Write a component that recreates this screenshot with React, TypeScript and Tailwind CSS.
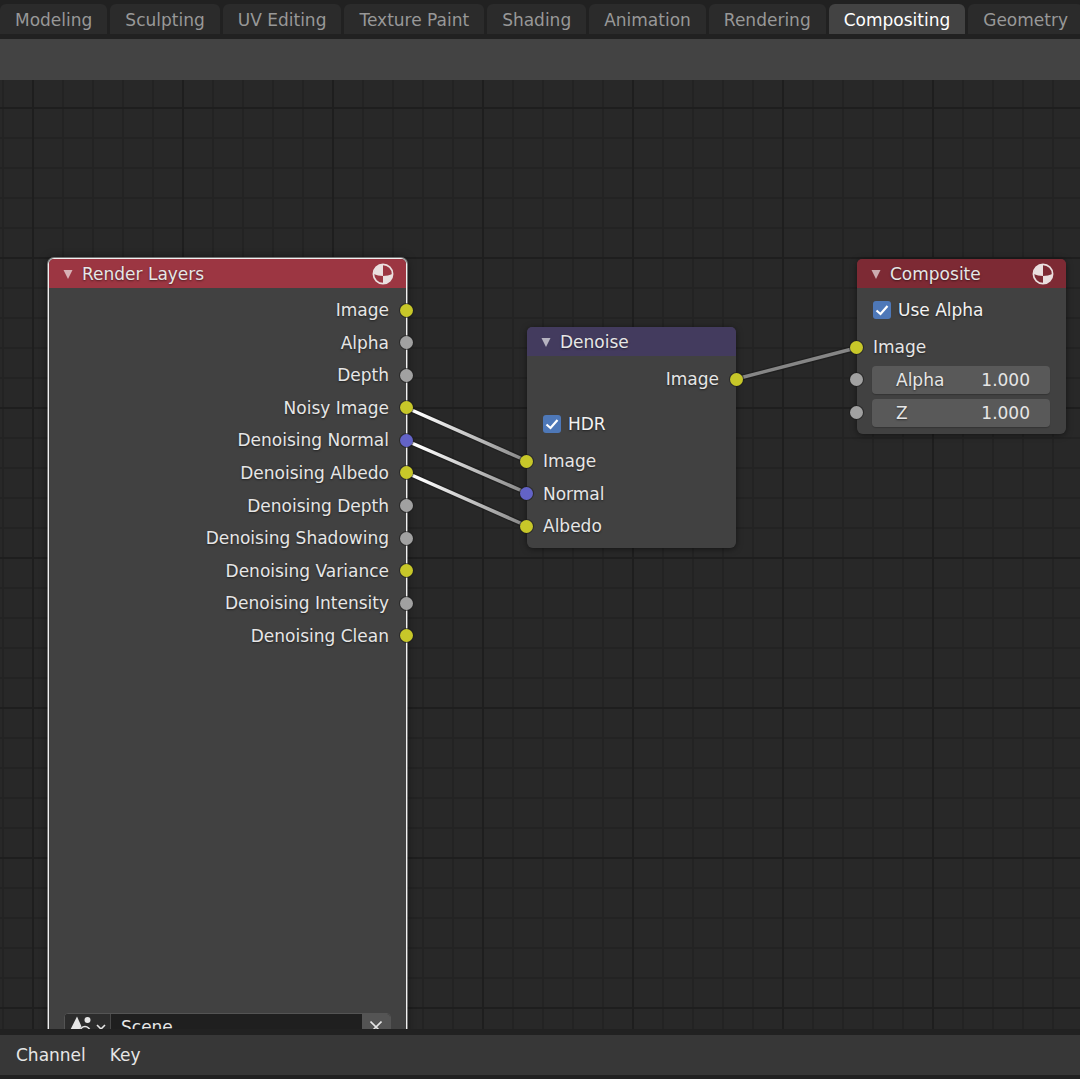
import React from 'react';

type SocketKind = 'color' | 'value' | 'vector';

interface SocketProps {
    label: string;
    kind: SocketKind;
}

const TABS = [
    'Modeling',
    'Sculpting',
    'UV Editing',
    'Texture Paint',
    'Shading',
    'Animation',
    'Rendering',
    'Compositing',
    'Geometry',
];

const RENDER_OUTPUTS: SocketProps[] = [
    { label: 'Image', kind: 'color' },
    { label: 'Alpha', kind: 'value' },
    { label: 'Depth', kind: 'value' },
    { label: 'Noisy Image', kind: 'color' },
    { label: 'Denoising Normal', kind: 'vector' },
    { label: 'Denoising Albedo', kind: 'color' },
    { label: 'Denoising Depth', kind: 'value' },
    { label: 'Denoising Shadowing', kind: 'value' },
    { label: 'Denoising Variance', kind: 'color' },
    { label: 'Denoising Intensity', kind: 'value' },
    { label: 'Denoising Clean', kind: 'color' },
];

const SOCKET_COLORS: Record<SocketKind, string> = {
    color: 'bg-[#c7c729]',
    value: 'bg-[#a1a1a1]',
    vector: 'bg-[#6363c7]',
};

// Link end points in canvas coordinates
const LINKS = [
    { x1: 407, y1: 328, x2: 527, y2: 381, stroke: 'url(#link-active)' },
    { x1: 407, y1: 361, x2: 527, y2: 413, stroke: 'url(#link-active)' },
    { x1: 407, y1: 393, x2: 527, y2: 446, stroke: 'url(#link-active)' },
    { x1: 736, y1: 299, x2: 856, y2: 268, stroke: '#868686' },
];

function Socket({ kind }: { kind: SocketKind }) {
    return (
        <span className={`size-[13px] shrink-0 rounded-full shadow-[0_0_0_1px_#1c1c1c99] ${SOCKET_COLORS[kind]}`} />
    );
}

function OutputRow({ label, kind }: SocketProps) {
    return (
        <li className="-mr-[7px] flex h-8 items-center justify-end gap-[11px]">
            <span>{label}</span>
            <Socket kind={kind} />
        </li>
    );
}

function InputRow({ label, kind }: SocketProps) {
    return (
        <li className="-ml-[7px] flex h-8 items-center gap-[10px]">
            <Socket kind={kind} />
            <span>{label}</span>
        </li>
    );
}

function MaterialIcon() {
    return (
        <svg viewBox="0 0 22 22" className="size-[22px]" aria-hidden="true">
            <circle cx="11" cy="11" r="9.6" fill="none" stroke="#eadfdf" strokeWidth="1.7" />
            <path d="M11 1.5A9.5 9.5 0 0 0 1.5 11Q6 13 11 13Z" fill="#eadfdf" />
            <path d="M11 13Q16 13 20.5 11A9.5 9.5 0 0 1 11 20.5Z" fill="#eadfdf" />
        </svg>
    );
}

function NodeHeader({ title, color, icon }: { title: string; color: string; icon?: boolean }) {
    return (
        <header className={`flex h-[29px] items-center rounded-t-[5px] pr-3 pl-[14px] ${color}`}>
            <button type="button" aria-label={`Collapse ${title}`} className="mr-[9px]">
                <svg viewBox="0 0 10 10" className="size-[10px]" aria-hidden="true">
                    <path d="M0.5 1h9L5 10z" fill="#ffffff9c" />
                </svg>
            </button>
            <h2 className="flex-1">{title}</h2>
            {icon && <MaterialIcon />}
        </header>
    );
}

function CheckRow({ label }: { label: string }) {
    return (
        <label className="flex h-8 items-center gap-[7px] px-4 text-[#f2f2f2]">
            <span className="grid size-[18px]">
                <input
                    type="checkbox"
                    defaultChecked
                    className="col-start-1 row-start-1 size-[18px] appearance-none rounded-[3px] bg-[#4e78b8]"
                />
                <svg viewBox="0 0 18 18" className="pointer-events-none col-start-1 row-start-1 size-[18px]" aria-hidden="true">
                    <path d="M3.5 9.5 7.5 13 14.5 5" fill="none" stroke="#fff" strokeWidth="2.2" />
                </svg>
            </span>
            {label}
        </label>
    );
}

function NumberRow({ label }: { label: string }) {
    return (
        <li className="-ml-[7px] flex h-[33px] items-center gap-[9px] pr-4">
            <Socket kind="value" />
            <label className="flex h-7 min-w-0 flex-1 items-center justify-between rounded bg-[#595959] pr-5 pl-6 shadow-[0_1px_1px_#00000033]">
                {label}
                <input type="text" defaultValue="1.000" className="w-16 bg-transparent text-right outline-none" />
            </label>
        </li>
    );
}

function RenderLayersNode() {
    return (
        <section className="absolute top-[178px] left-12 w-[359px] rounded-md border border-[#f0f0f0] bg-[#424242f7] shadow-[0_0_0_1px_#ffffff66,0_0_8px_#00000080]">
            <NodeHeader title="Render Layers" color="bg-[#9c3642]" icon />
            <ul className="mt-[6px] flex h-[358px] flex-col justify-between">
                {RENDER_OUTPUTS.map((output) => (
                    <OutputRow key={output.label} {...output} />
                ))}
            </ul>
            <div className="mx-[15px] mt-[361px] mb-4 flex h-7 overflow-hidden rounded border border-[#545454] bg-[#1f1f1f]">
                <button type="button" aria-label="Browse scene" className="flex w-[46px] items-center gap-1 border-r border-[#484848] bg-[#2c2c2c] pl-[5px]">
                    <svg viewBox="0 0 22 22" className="size-[22px]" aria-hidden="true">
                        <path d="M7 0.5 0 14.5Q4 17 8 15.5L11.5 10.5Z" fill="#e6e6e6" />
                        <circle cx="17.5" cy="4" r="3" fill="#e6e6e6" />
                        <circle cx="15" cy="15.5" r="5" fill="none" stroke="#e6e6e6" strokeWidth="1.6" />
                    </svg>
                    <svg viewBox="0 0 10 6" className="h-[6px] w-[10px]" aria-hidden="true">
                        <path d="M1 1l4 4 4-4" fill="none" stroke="#e6e6e6" strokeWidth="1.6" />
                    </svg>
                </button>
                <input type="text" aria-label="Scene" defaultValue="Scene" className="min-w-0 flex-1 bg-transparent px-[10px] outline-none" />
                <button type="button" aria-label="Unlink scene" className="flex w-7 items-center justify-center bg-[#545454]">
                    <svg viewBox="0 0 12 12" className="size-3" aria-hidden="true">
                        <path d="M0.5 0.5l11 11M11.5 0.5l-11 11" stroke="#e6e6e6" strokeWidth="1.6" />
                    </svg>
                </button>
            </div>
        </section>
    );
}

function DenoiseNode() {
    return (
        <section className="absolute top-[247px] left-[527px] w-[209px] rounded-md bg-[#424242f7] pb-[6px] shadow-[0_1px_6px_#00000080]">
            <NodeHeader title="Denoise" color="bg-[#433b5e]" />
            <ul className="mt-[7px]">
                <OutputRow label="Image" kind="color" />
            </ul>
            <div className="mt-[13px] mb-[5px]">
                <CheckRow label="HDR" />
            </div>
            <ul className="flex h-[97px] flex-col justify-between">
                <InputRow label="Image" kind="color" />
                <InputRow label="Normal" kind="vector" />
                <InputRow label="Albedo" kind="color" />
            </ul>
        </section>
    );
}

function CompositeNode() {
    return (
        <section className="absolute top-[179px] left-[857px] w-[209px] rounded-md bg-[#424242f7] pb-[5px] shadow-[0_1px_6px_#00000080]">
            <NodeHeader title="Composite" color="bg-[#7d2a34]" icon />
            <div className="mt-[6px] mb-[5px]">
                <CheckRow label="Use Alpha" />
            </div>
            <ul>
                <InputRow label="Image" kind="color" />
                <NumberRow label="Alpha" />
                <NumberRow label="Z" />
            </ul>
        </section>
    );
}

function Links() {
    return (
        <svg className="absolute inset-0 size-full" aria-hidden="true">
            <defs>
                <linearGradient id="link-active" gradientUnits="userSpaceOnUse" x1="407" y1="0" x2="527" y2="0">
                    <stop offset="0.1" stopColor="#ffffff" />
                    <stop offset="1" stopColor="#848484" />
                </linearGradient>
            </defs>
            {LINKS.map(({ stroke, ...line }) => (
                <g key={line.y1}>
                    <line {...line} stroke="#1a1a1a" strokeOpacity="0.6" strokeWidth="6" />
                    <line {...line} stroke={stroke} strokeWidth="3.5" />
                </g>
            ))}
        </svg>
    );
}

// Two grid layers: faint lines every 30px, darker ones every 150px
const GRID =
    'bg-[#282828] bg-[linear-gradient(to_right,#1e1e1e_2px,transparent_2px),linear-gradient(to_bottom,#1e1e1e_2px,transparent_2px),linear-gradient(to_right,#232323_2px,transparent_2px),linear-gradient(to_bottom,#232323_2px,transparent_2px)] bg-size-[150px_150px,150px_150px,30px_30px,30px_30px] bg-position-[32px_27px,32px_27px,2px_27px,2px_27px]';

export default function App() {
    return (
        <div className="flex h-screen flex-col overflow-hidden bg-[#212121] font-['DejaVu_Sans',sans-serif] text-[17px] leading-6 text-[#e6e6e6]">
            <nav className="flex h-[39px] shrink-0 gap-[3px] overflow-hidden pt-1 pb-[5px]">
                {TABS.map((tab) => (
                    <button
                        key={tab}
                        type="button"
                        className={`shrink-0 rounded-t-md px-[15px] pt-0.5 whitespace-nowrap ${
                            tab === 'Compositing' ? 'bg-[#434343] text-white' : 'bg-[#2b2b2b] text-[#989898]'
                        }`}
                    >
                        {tab}
                    </button>
                ))}
            </nav>

            <div className="h-[41px] shrink-0 bg-[#434343]" />

            <main className={`relative min-h-0 flex-1 overflow-hidden text-shadow-[0_1px_2px_#00000080] ${GRID}`}>
                <Links />
                <RenderLayersNode />
                <DenoiseNode />
                <CompositeNode />
            </main>

            <footer className="mt-[6px] mb-1 flex h-10 shrink-0 items-center gap-6 bg-[#373737] px-4">
                <button type="button">Channel</button>
                <button type="button">Key</button>
            </footer>
        </div>
    );
}
